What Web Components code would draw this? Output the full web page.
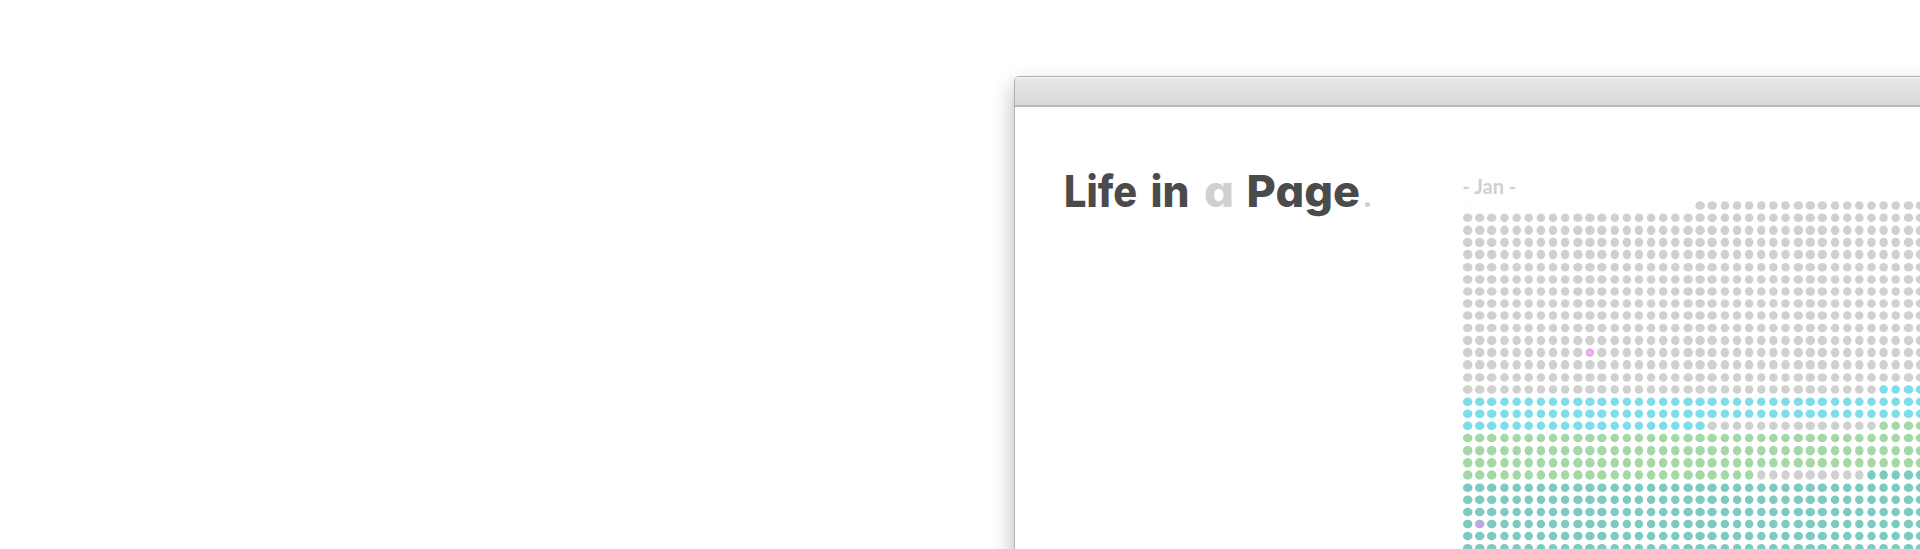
<!DOCTYPE html>
<html lang="en"><head><meta charset="utf-8"><title>Life in a Page</title>
<style>html,body{margin:0;height:100%;overflow:hidden;background:#fff}</style></head>
<body><life-stage></life-stage>
<script>
const define=(name,html,ready)=>customElements.define(name,class extends HTMLElement{
  constructor(){super();this.attachShadow({mode:'open'}).innerHTML=html;if(ready)ready(this.shadowRoot);}
});
define('life-title',`<style>:host{display:block;width:310px;height:70px}svg{display:block;overflow:visible}
text{font:800 44px Inter,sans-serif;font-feature-settings:"cv11" 1;fill:#4b4b4b}.soft{fill:#d0d0d0}</style>
<svg width="310" height="70"><text x="-2" y="47" textLength="73" lengthAdjust="spacingAndGlyphs">Life</text>
<text x="84.5" y="47" textLength="39" lengthAdjust="spacingAndGlyphs">in</text>
<text class="soft" x="138" y="47" textLength="30" lengthAdjust="spacingAndGlyphs">a</text>
<text x="180.5" y="47" textLength="113.5" lengthAdjust="spacingAndGlyphs">Page</text>
<text class="soft" x="296.5" y="47" style="font-size:28px">.</text></svg>`);
define('life-dots',`<style>:host{display:block;width:458px;height:353px}svg{display:block}</style><svg width="458" height="353"></svg>`,root=>{
  const svg=root.querySelector('svg'),ns='http://www.w3.org/2000/svg';
  const xs=[0,12,24,36.8,49,61,73.2,85.3,97.4], ys=[0,12.3,24.9,37,49.2,61.9,74,86.1,98.2];
  const add=(cx,cy,rx,ry,fill,stroke,w)=>{const e=document.createElementNS(ns,'ellipse');
    for(const [k,v] of Object.entries({cx,cy,rx,ry,fill}))e.setAttribute(k,v);
    if(stroke){e.setAttribute('stroke',stroke);e.setAttribute('stroke-width',w||2);}svg.append(e);};
  const grey='#d0d0d0',blue='#7cdeea',green='#a4d8a6',teal='#7dcac3';
  const color=(r,c)=>r<15?grey:r===15?(c<34?grey:blue):r<18?blue:r===18?(c<20?blue:c<34?grey:green):
    r<22?green:r===22?(c<24?green:c<33?grey:teal):teal;
  for(let r=0;r<29;r++)for(let c=r?0:19;c<38;c++){
    const x=5.7+xs[c%9]+Math.floor(c/9)*110.2,y=9.4+ys[r%9]+Math.floor(r/9)*110.2;
    const rx=c%9<3?4.75:4.25,ry=r%9>1&&r%9<5?4.75:4.25;
    if(r===12&&c===10)add(x,y,3.2,3.2,'#d0d0d0','#ee9af0',2);
    else if(r===26&&c===1){add(x,y,rx,ry,teal);add(x,y,3.2,2.8,teal,'#dc98e8',2);}
    else add(x,y,rx,ry,color(r,c));
  }
  add(5.7,9.2,4,4,'none','#fdfdfd',1);
});
define('life-month',`<style>:host{display:flex;flex-direction:column;width:458px}
h2{margin:0;height:20px;padding-left:.5px;font:700 20px/20px Lato,sans-serif;color:#d0d0d0;white-space:nowrap}</style>
<h2><slot></slot></h2><life-dots></life-dots>`);
define('life-window',`<style>:host{display:flex;flex-direction:column;box-sizing:border-box;width:1000px;height:560px;border:1px solid #b0b0b0;border-radius:5px 0 0 0;box-shadow:0 10px 21px rgba(0,0,0,.3);background:#fff;overflow:hidden}
.bar{box-sizing:border-box;height:30px;flex:none;border-top:1px solid #f5f5f5;border-bottom:2px solid #b8b8b8;background:linear-gradient(#e8e8e8,#d8d8d8)}
main{display:flex;padding:53px 0 0 51px}life-month{margin:16px 0 0 86px}</style>
<div class="bar"></div><main><slot></slot><life-month>- Jan -</life-month></main>`);
define('life-stage',`<style>:host{display:flex;justify-content:flex-start;box-sizing:border-box;width:1920px;height:549px;padding:76px 0 0 1014px;overflow:hidden;background:#fff}life-window{flex:none}</style>
<life-window><life-title></life-title></life-window>`);
</script></body></html>
